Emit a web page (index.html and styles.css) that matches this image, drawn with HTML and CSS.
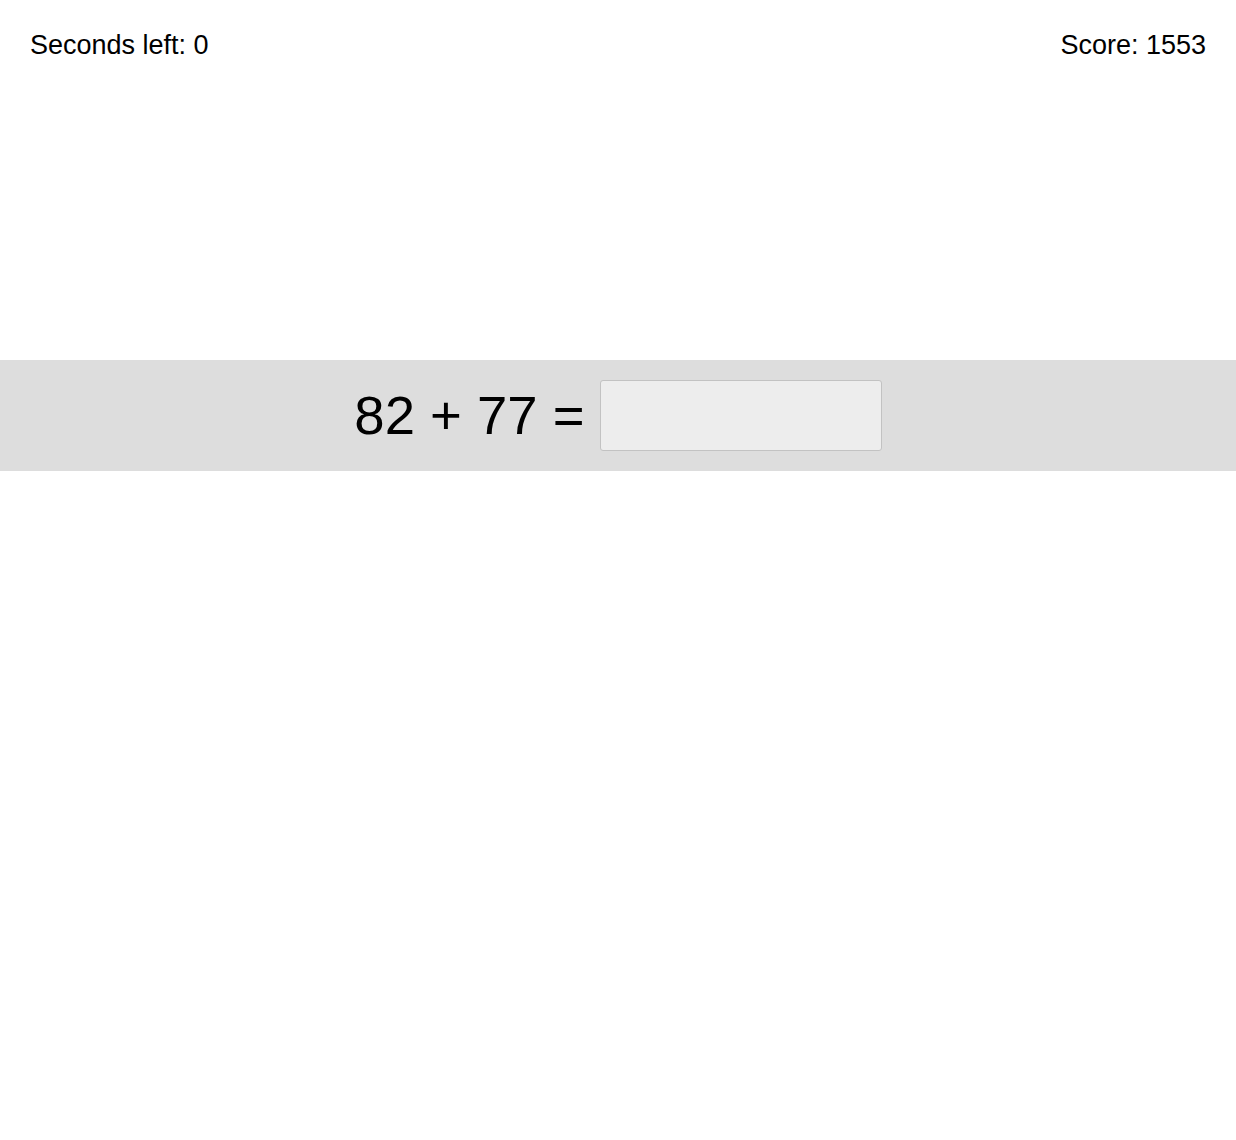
FILE: index.html
```html
<!DOCTYPE html>
<html>
<head>
<meta charset="utf-8">
<link rel="stylesheet" href="styles.css">
</head>
<body>
<header class="topbar">
  <div class="timer">Seconds left: 0</div>
  <div class="score">Score: 1553</div>
</header>
<main class="band">
  <span class="problem">82 + 77 =</span>
  <input class="answer" type="text">
</main>
</body>
</html>
```
FILE: styles.css
```css
html, body {
  margin: 0;
  padding: 0;
  background: #fff;
}
body {
  font-family: "Liberation Sans", Arial, sans-serif;
  color: #000;
}
.topbar {
  display: flex;
  justify-content: space-between;
  align-items: flex-start;
  box-sizing: border-box;
  height: 360px;
  padding: 30px 30px 0 30px;
  font-size: 27px;
}
.band {
  display: flex;
  justify-content: center;
  align-items: center;
  gap: 15px;
  background: #dddddd;
  padding: 20px 0;
}
.problem {
  font-size: 54.5px;
  line-height: normal;
}
.answer {
  box-sizing: border-box;
  width: 282px;
  height: 71px;
  margin: 0;
  padding: 0 10px;
  border: 1px solid #c2c2c2;
  border-radius: 3px;
  background: #ededed;
  font-family: "Liberation Sans", Arial, sans-serif;
  font-size: 40px;
  outline: none;
}
```
